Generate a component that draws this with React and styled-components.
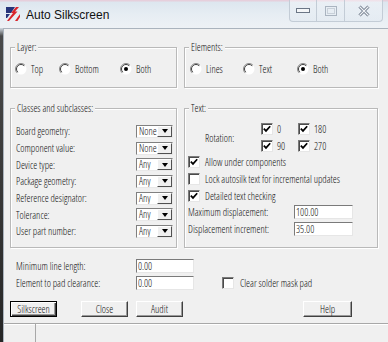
import React from "react";
import styled, { createGlobalStyle } from "styled-components";

const GlobalStyle = createGlobalStyle`
  html, body {
    margin: 0;
    padding: 0;
    background: #f0f0f0;
  }
  body {
    font-family: "Open Sans", "Noto Sans", "Liberation Sans", Arial, sans-serif;
    font-stretch: 76%;
    font-weight: 360;
    font-size: 10px;
    color: #111;
  }
`;

const Window = styled.div`
  width: 388px;
  height: 342px;
  display: flex;
  flex-direction: column;
  overflow: hidden;
`;

const TitleBar = styled.div`
  height: 28px;
  flex: none;
  display: flex;
  align-items: flex-start;
  padding-left: 5px;
  background: linear-gradient(#e6cfdc 0, #e6cfdc 1px, #dde6ef 2px, #e6edf3 14px, #edf1f5 28px);
`;

const AppIcon = styled.svg`
  margin-top: 6px;
  flex: none;
`;

const Title = styled.div`
  margin-left: 5px;
  line-height: 30px;
  font-family: "Liberation Sans", Arial, sans-serif;
  font-stretch: normal;
  font-weight: 400;
  font-size: 12px;
  color: #111;
`;

const Controls = styled.div`
  margin-left: auto;
  margin-right: 5px;
  display: flex;
  height: 21px;
  border: 1px solid #c3ccd6;
  border-top: none;
  border-radius: 0 0 4px 4px;
  background: linear-gradient(rgba(255, 255, 255, 0.4), rgba(220, 229, 239, 0.4));
`;

const CtrlBtn = styled.div`
  width: ${(p) => p.$w}px;
  display: flex;
  align-items: center;
  justify-content: center;
  & + & {
    border-left: 1px solid #c3ccd6;
  }
`;

const Frame = styled.div`
  flex: 1;
  display: flex;
  min-height: 0;
`;

const LeftEdge = styled.div`
  width: 3px;
  flex: none;
  background: linear-gradient(#cfd7df 0, #4a4a4a 8px, #262626 100%);
`;

const Client = styled.div`
  flex: 1;
  display: flex;
  flex-direction: column;
  background: #f0f0f0;
  border-top: 1px solid #aab3bd;
  border-left: 1px solid #aab3bd;
  padding: 12px 0 0 6px;
`;

const GroupRow = styled.div`
  display: flex;
  gap: 7px;
  margin-top: ${(p) => p.$top || 0}px;
`;

const Group = styled.fieldset`
  margin: 0;
  padding: 0;
  box-sizing: border-box;
  width: ${(p) => p.$w}px;
  height: ${(p) => p.$h}px;
  min-width: 0;
  border: 1px solid #b9b9b9;
  box-shadow: inset 1px 1px 0 #fff, 1px 1px 0 #fff;
`;

const Legend = styled.legend`
  margin-left: 4px;
  padding: 0 2px;
  line-height: 12px;
  background: #f0f0f0;
`;

const GroupBody = styled.div`
  padding: ${(p) => p.$pad};
`;

const OptionRow = styled.div`
  display: flex;
  height: 14px;
`;

const Option = styled.label`
  display: flex;
  align-items: center;
  gap: 4px;
  flex: none;
  width: ${(p) => (p.$w ? `${p.$w}px` : "auto")};
`;

const FormRow = styled.div`
  display: flex;
  align-items: center;
  height: 16.7px;
`;

const Label = styled.span`
  width: ${(p) => p.$w}px;
  flex: none;
  white-space: nowrap;
`;

const Combo = styled.div`
  width: 38px;
  height: 13px;
  box-sizing: border-box;
  display: flex;
  background: #fff;
  border: 1px solid;
  border-color: #808080 #e8e8e8 #e8e8e8 #808080;
`;

const ComboValue = styled.span`
  flex: 1;
  overflow: hidden;
  white-space: nowrap;
  padding-left: 2px;
  line-height: 11px;
`;

const ComboButton = styled.span`
  width: 15px;
  flex: none;
  box-sizing: border-box;
  background: #f0f0f0;
  border: 1px solid;
  border-color: #fff #505050 #505050 #fff;
  display: flex;
  align-items: center;
  justify-content: center;
  &::after {
    content: "";
    border-left: 3.5px solid transparent;
    border-right: 3.5px solid transparent;
    border-top: 4px solid #000;
  }
`;

const Box = styled.span`
  width: 12px;
  height: 12px;
  flex: none;
  box-sizing: border-box;
  background: #fff;
  border: 1px solid;
  border-color: #7a7a7a #e6e6e6 #e6e6e6 #7a7a7a;
  box-shadow: inset 1px 1px 0 #4a4a4a;
  display: flex;
  align-items: center;
  justify-content: center;
`;

const RotationGrid = styled.div`
  display: grid;
  grid-template-columns: 56px 37px auto;
  grid-template-rows: 16.7px 16.7px;
  align-items: center;
  margin-left: 17px;
`;

const RotationLabel = styled.span`
  grid-row: 1 / span 2;
  padding-top: 2px;
`;

const CheckItem = styled.label`
  display: flex;
  align-items: center;
  gap: ${(p) => p.$gap || 5}px;
  height: 16.7px;
  margin-left: ${(p) => p.$ml || 0}px;
  white-space: nowrap;
`;

const Field = styled.input`
  width: ${(p) => p.$w}px;
  height: 14px;
  box-sizing: border-box;
  margin: 0;
  padding: 0 1px;
  font: inherit;
  color: #111;
  background: #fff;
  border: 1px solid;
  border-color: #7a7a7a #e6e6e6 #e6e6e6 #7a7a7a;
  outline: none;
`;

const Bottom = styled.div`
  margin-top: 10px;
  padding-left: 6px;
`;

const ButtonRow = styled.div`
  display: flex;
  margin-top: 10px;
`;

const Button = styled.button`
  width: ${(p) => p.$w || 47}px;
  height: 16px;
  box-sizing: border-box;
  margin: 0 0 0 ${(p) => p.$ml || 0}px;
  padding: 0;
  font: inherit;
  color: #111;
  background: #f0f0f0;
  border: 1px solid;
  border-color: ${(p) => (p.$default ? "#000" : "#fff #404040 #404040 #fff")};
  box-shadow: ${(p) =>
    p.$default
      ? "inset 1px 1px 0 #fff, inset -1px -1px 0 #404040, inset -2px -2px 0 #9a9a9a"
      : "inset -1px -1px 0 #9a9a9a"};
`;

const StatusBar = styled.div`
  margin-top: auto;
  margin-left: -6px;
  height: 19px;
  display: flex;
  box-sizing: border-box;
  border-top: 1px solid #a8a8a8;
  box-shadow: inset 0 1px 0 #fff;
`;

const StatusCell = styled.div`
  width: 31px;
  border-right: 1px solid #a8a8a8;
`;

const Radio = ({ on }) => (
  <svg width="12" height="12" viewBox="0 0 12 12">
    <circle cx="6" cy="6" r="5.5" fill="#fff" />
    <path d="M2.1 9.9 A5.5 5.5 0 0 1 9.9 2.1" stroke="#8a8a8a" fill="none" />
    <path d="M2.8 9.2 A4.5 4.5 0 0 1 9.2 2.8" stroke="#404040" fill="none" />
    {on && <circle cx="6" cy="6" r="2" fill="#000" />}
  </svg>
);

const Check = ({ on }) => (
  <Box>
    {on && (
      <svg width="8" height="8" viewBox="0 0 8 8">
        <path d="M0.8 3.6 L3 5.9 L7.2 1.2" stroke="#000" strokeWidth="1.7" fill="none" />
      </svg>
    )}
  </Box>
);

const Select = ({ value }) => (
  <Combo>
    <ComboValue>{value}</ComboValue>
    <ComboButton />
  </Combo>
);

const classes = [
  ["Board geometry:", "None"],
  ["Component value:", "None"],
  ["Device type:", "Any"],
  ["Package geometry:", "Any"],
  ["Reference designator:", "Any"],
  ["Tolerance:", "Any"],
  ["User part number:", "Any"],
];

export default function App() {
  return (
    <Window>
      <GlobalStyle />
      <TitleBar>
        <AppIcon width="16" height="16" viewBox="0 0 16 16">
          <path d="M1 1 H10 L6 7 H1 Z" fill="#27357a" />
          <path d="M1 8 H5 L2 12 H1 Z" fill="#27357a" />
          <path d="M2 15 L8 7 L6 7 L11 1 L14 1 L10 5.5 L12.5 5.5 L4 15 Z" fill="#d9252c" />
          <path d="M10 15 L15 8 L15 11 L12.5 15 Z" fill="#d9252c" />
        </AppIcon>
        <Title>Auto Silkscreen</Title>
        <Controls>
          <CtrlBtn $w={26}>
            <svg width="14" height="6" viewBox="0 0 14 6">
              <rect x="0.5" y="0.5" width="13" height="4" fill="#f4f6f8" stroke="#6b7686" />
            </svg>
          </CtrlBtn>
          <CtrlBtn $w={27}>
            <svg width="12" height="10" viewBox="0 0 12 10">
              <rect x="0.5" y="0.5" width="11" height="9" fill="none" stroke="#aab4c0" />
              <rect x="2.5" y="2.5" width="7" height="5" fill="none" stroke="#c8d0d9" />
            </svg>
          </CtrlBtn>
          <CtrlBtn $w={37}>
            <svg width="12" height="12" viewBox="0 0 12 12">
              <path d="M1.5 1.5 L10.5 10.5 M10.5 1.5 L1.5 10.5" stroke="#6b7686" strokeWidth="3" />
              <path d="M1.5 1.5 L10.5 10.5 M10.5 1.5 L1.5 10.5" stroke="#f2f4f7" strokeWidth="1.2" />
            </svg>
          </CtrlBtn>
        </Controls>
      </TitleBar>
      <Frame>
        <LeftEdge />
        <Client>
          <GroupRow>
            <Group $w={167} $h={47}>
              <Legend>Layer:</Legend>
              <GroupBody $pad="9px 0 0 4px">
                <OptionRow>
                  <Option $w={44}>
                    <Radio />
                    Top
                  </Option>
                  <Option $w={61}>
                    <Radio />
                    Bottom
                  </Option>
                  <Option>
                    <Radio on />
                    Both
                  </Option>
                </OptionRow>
              </GroupBody>
            </Group>
            <Group $w={194} $h={47}>
              <Legend>Elements:</Legend>
              <GroupBody $pad="9px 0 0 5px">
                <OptionRow>
                  <Option $w={53}>
                    <Radio />
                    Lines
                  </Option>
                  <Option $w={54}>
                    <Radio />
                    Text
                  </Option>
                  <Option>
                    <Radio on />
                    Both
                  </Option>
                </OptionRow>
              </GroupBody>
            </Group>
          </GroupRow>
          <GroupRow $top={14}>
            <Group $w={167} $h={146}>
              <Legend>Classes and subclasses:</Legend>
              <GroupBody $pad="9px 3px 0 5px">
                {classes.map(([label, value]) => (
                  <FormRow key={label}>
                    <Label $w={120}>{label}</Label>
                    <Select value={value} />
                  </FormRow>
                ))}
              </GroupBody>
            </Group>
            <Group $w={194} $h={146}>
              <Legend>Text:</Legend>
              <GroupBody $pad="6.6px 3px 0 3px">
                <RotationGrid>
                  <RotationLabel>Rotation:</RotationLabel>
                  <CheckItem $gap={4}>
                    <Check on />0
                  </CheckItem>
                  <CheckItem $gap={4}>
                    <Check on />
                    180
                  </CheckItem>
                  <CheckItem $gap={4}>
                    <Check on />
                    90
                  </CheckItem>
                  <CheckItem $gap={4}>
                    <Check on />
                    270
                  </CheckItem>
                </RotationGrid>
                <CheckItem>
                  <Check on />
                  Allow under components
                </CheckItem>
                <CheckItem>
                  <Check />
                  Lock autosilk text for incremental updates
                </CheckItem>
                <CheckItem>
                  <Check on />
                  Detailed text checking
                </CheckItem>
                <FormRow>
                  <Label $w={106}>Maximum displacement:</Label>
                  <Field $w={59} readOnly value="100.00" />
                </FormRow>
                <FormRow>
                  <Label $w={106}>Displacement increment:</Label>
                  <Field $w={59} readOnly value="35.00" />
                </FormRow>
              </GroupBody>
            </Group>
          </GroupRow>
          <Bottom>
            <FormRow>
              <Label $w={120}>Minimum line length:</Label>
              <Field $w={58} readOnly value="0.00" />
            </FormRow>
            <FormRow>
              <Label $w={120}>Element to pad clearance:</Label>
              <Field $w={58} readOnly value="0.00" />
              <CheckItem $ml={28} $gap={6}>
                <Check />
                Clear solder mask pad
              </CheckItem>
            </FormRow>
          </Bottom>
          <ButtonRow>
            <Button $default>Silkscreen</Button>
            <Button $ml={24}>Close</Button>
            <Button $ml={8}>Audit</Button>
            <Button $ml={120} $w={49}>
              Help
            </Button>
          </ButtonRow>
          <StatusBar>
            <StatusCell />
          </StatusBar>
        </Client>
      </Frame>
    </Window>
  );
}
